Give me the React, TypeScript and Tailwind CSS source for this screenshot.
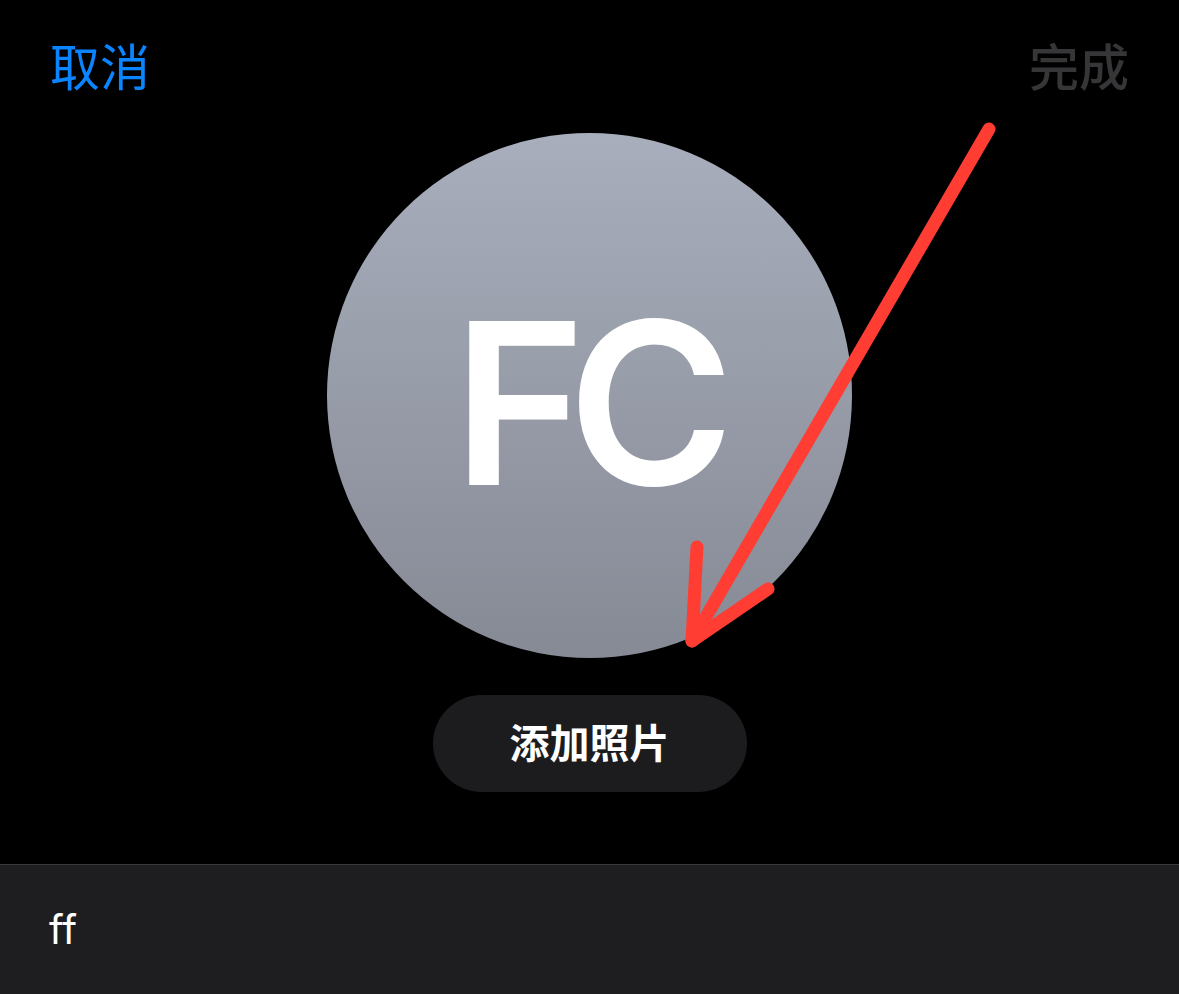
import React from 'react';

export default function App() {
  const cjk = { fontFamily: 'Inter, "Noto Sans CJK SC", sans-serif' };

  return (
    <div className="relative w-[1179px] h-[994px] bg-black overflow-hidden" style={cjk}>
      <div className="flex flex-col h-full">
        {/* 顶部导航 */}
        <header className="h-[133px] flex justify-between items-start px-[50px] pt-[43px]">
          <button className="text-[50px] leading-none text-[#0a84ff]">取消</button>
          <button className="text-[50px] leading-none text-[#363638] font-medium">完成</button>
        </header>

        {/* 头像 */}
        <div className="flex justify-center">
          <div className="w-[525px] h-[525px] rounded-full bg-gradient-to-b from-[#a8aebc] to-[#868a95] flex items-center justify-center pt-[14px]">
            <span className="text-white text-[226px] leading-none font-semibold tracking-[-18px] pr-[10px]">FC</span>
          </div>
        </div>

        <div className="flex justify-center mt-[37px]">
          <button className="w-[314px] h-[97px] rounded-full bg-[#1c1c1e] text-white text-[40px] font-bold">
            添加照片
          </button>
        </div>

        {/* 名字输入 */}
        <div className="mt-[72px] flex-1 bg-[#1e1e20] border-t border-[#3a3a3c] flex items-center px-[49px]">
          <span className="text-white text-[40px]">ff</span>
        </div>
      </div>

      {/* 标注箭头 */}
      <svg className="absolute inset-0 pointer-events-none" width="1179" height="994" viewBox="0 0 1179 994">
        <g stroke="#ff3d33" strokeWidth="13" strokeLinecap="round" strokeLinejoin="round" fill="none">
          <path d="M989 129 L692 641" />
          <path d="M697 547 L692 641 L768 589" />
        </g>
      </svg>
    </div>
  );
}
